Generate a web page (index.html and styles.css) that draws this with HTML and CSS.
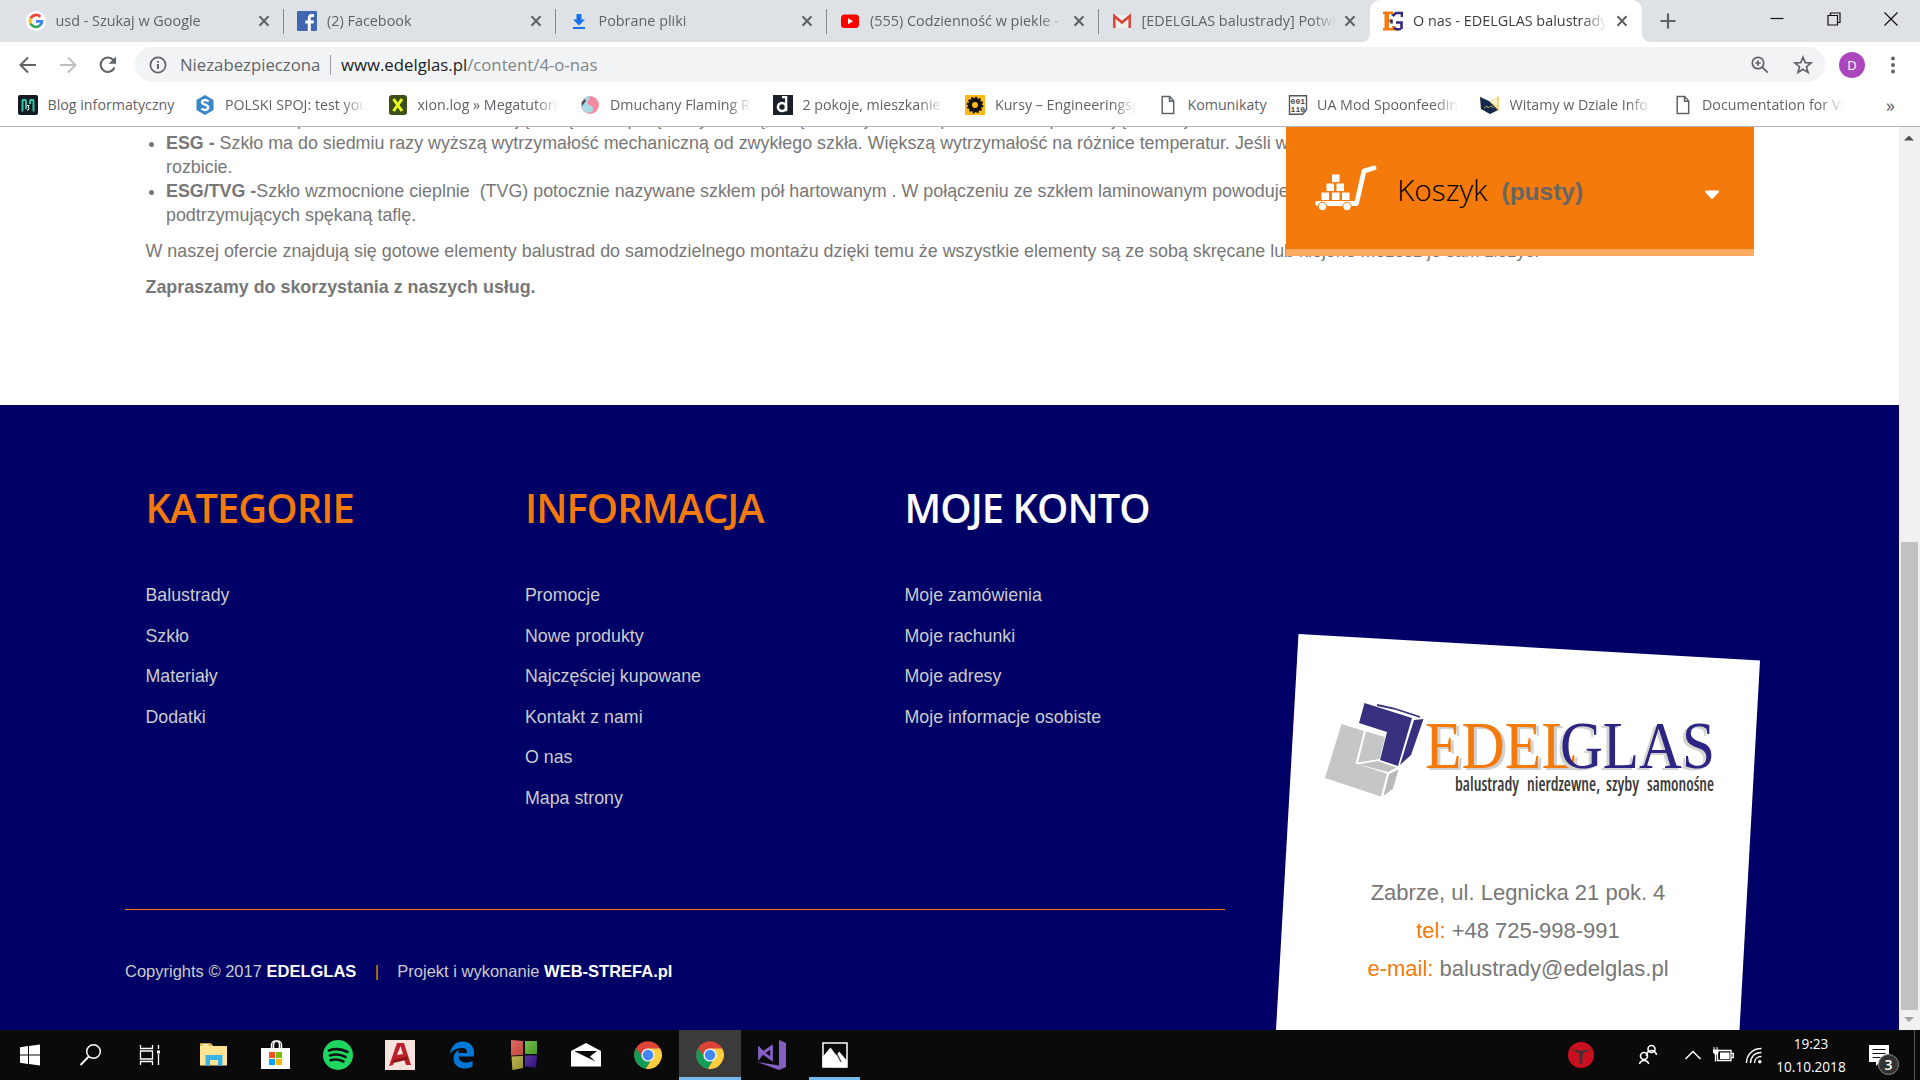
FILE: index.html
```html
<!DOCTYPE html>
<html lang="pl">
<head>
<meta charset="utf-8">
<title>O nas - EDELGLAS balustrady</title>
<link rel="stylesheet" href="styles.css">
</head>
<body>
<svg class="defs" aria-hidden="true">
  <symbol id="x" viewBox="0 0 12 12"><path d="M1.5 1.2l9 9.6M10.5 1.2l-9 9.6" stroke="#5f6368" stroke-width="2"/></symbol>
  <symbol id="page" viewBox="0 0 20 20"><path d="M4.2 1.5h7.5l4 4.5v12.500h-11.500zM11.500 1.500v4.700h4" fill="none" stroke="#5f6368" stroke-width="1.500"/></symbol>
  <symbol id="chrome" viewBox="0 0 28 28">
    <circle cx="14" cy="14" r="13.800" fill="#db4437"/>
    <path d="M2 7.200A13.800 13.800 0 0 0 12 27.700L18 17 14 14 8 15z" fill="#0f9d58"/>
    <path d="M14 7.500h12.200A13.800 13.800 0 0 1 12 27.700L19 16z" fill="#ffcd40"/>
    <circle cx="14" cy="14" r="6.600" fill="#f1f1f1"/><circle cx="14" cy="14" r="5.200" fill="#4285f4"/>
  </symbol>
</svg>

<header class="tabs">
  <div class="tab">
    <svg class="fav" viewBox="0 0 20 20"><circle cx="10" cy="10" r="10" fill="#fff"/><g fill="none" stroke-width="2.800"><path d="M14.300 5.700A6 6 0 0 0 4.700 7.300" stroke="#ea4335"/><path d="M4.700 7.300a6 6 0 0 0 0 5.400" stroke="#fbbc05"/><path d="M4.700 12.700a6 6 0 0 0 9 1.900" stroke="#34a853"/><path d="M13.700 14.600A6 6 0 0 0 16 10.300H10" stroke="#4285f4"/></g></svg>
    <span class="tab-title">usd - Szukaj w Google</span><svg class="close"><use href="#x"/></svg>
  </div>
  <div class="tab">
    <svg class="fav" viewBox="0 0 20 20"><rect width="20" height="20" rx="1" fill="#4267b2"/><path d="M13.800 20v-7.600h2.700l.4-3h-3.100V7.500c0-.9.3-1.500 1.600-1.500h1.600V3.300c-.5-.1-1.300-.2-2.300-.2-2.400 0-3.900 1.400-3.900 3.900v2.400H8.300v3h2.500V20z" fill="#fff"/></svg>
    <span class="tab-title">(2) Facebook</span><svg class="close"><use href="#x"/></svg>
  </div>
  <div class="tab">
    <svg class="fav" viewBox="0 0 20 20"><path d="M7.500 3h5v5.500H16l-6 6-6-6h3.500zM4 16h12v2H4z" fill="#1a73e8"/></svg>
    <span class="tab-title">Pobrane pliki</span><svg class="close"><use href="#x"/></svg>
  </div>
  <div class="tab">
    <svg class="fav" viewBox="0 0 20 20"><rect x="1" y="3.500" width="18" height="13.500" rx="3.500" fill="#f00"/><path d="M8 7.200l5 3-5 3z" fill="#fff"/></svg>
    <span class="tab-title">(555) Codzienność w piekle -</span><svg class="close"><use href="#x"/></svg>
  </div>
  <div class="tab last">
    <svg class="fav" viewBox="0 0 20 20"><path d="M2 4h16v13H2z" fill="#eee"/><path d="M2.300 17V5l7.700 6.500L17.700 5v12" fill="none" stroke="#db4437" stroke-width="2.500"/></svg>
    <span class="tab-title">[EDELGLAS balustrady] Potwi</span><svg class="close"><use href="#x"/></svg>
  </div>
  <div class="tab active">
    <svg class="fav" viewBox="0 0 20 20"><path d="M0 .500h10v4H8V3H6v5.500h3v2.500H6v6h3v-2h3v4.500H0v-2.500h1.500V3H0z" fill="#f47a0b"/><path d="M19 6V2h-2.500L13 2 9.500 5M8.500 8.500v4M11 17l3 1.500 4-.5M13 11.500h5.500V18" fill="none" stroke="#332a80" stroke-width="2.600"/></svg>
    <span class="tab-title">O nas - EDELGLAS balustrady</span><svg class="close"><use href="#x"/></svg>
  </div>
  <svg class="plus" viewBox="0 0 16 16"><path d="M8 .500v15M.500 8h15" stroke="#5f6368" stroke-width="2.200"/></svg>
  <div class="window-buttons">
    <svg viewBox="0 0 14 14"><path d="M.500 6.500h13" stroke="#111" stroke-width="1.200"/></svg>
    <svg viewBox="0 0 14 14"><path d="M1 3.500h9.500V13H1zM3.500 3.500V1h9.500v9.500h-2.500" fill="none" stroke="#111" stroke-width="1.200"/></svg>
    <svg viewBox="0 0 14 14"><path d="M.500.500l13 13M13.500.500l-13 13" stroke="#111" stroke-width="1.200"/></svg>
  </div>
</header>

<div class="toolbar">
  <svg class="nav" viewBox="0 0 20 20"><path d="M18 10H3M10 2.500L2.500 10l7.500 7.500" fill="none" stroke="#5f6368" stroke-width="2"/></svg>
  <svg class="nav" viewBox="0 0 20 20"><path d="M2 10h15M10 2.500l7.500 7.500-7.500 7.500" fill="none" stroke="#bdc1c6" stroke-width="2"/></svg>
  <svg class="nav" viewBox="0 0 20 20"><path d="M16.500 12.500A7.200 7.200 0 1 1 15.300 5" fill="none" stroke="#5f6368" stroke-width="2.100"/><path d="M18 1.500v7.300h-7.300z" fill="#5f6368"/></svg>
  <div class="omnibox">
    <svg class="info" viewBox="0 0 18 18"><circle cx="9" cy="9" r="7.600" fill="none" stroke="#5f6368" stroke-width="1.700"/><path d="M9 8v5M9 5v1.800" stroke="#5f6368" stroke-width="1.900"/></svg>
    <span class="secure">Niezabezpieczona</span>
    <span class="url"><b>www.edelglas.pl</b>/content/4-o-nas</span>
    <svg class="zoomer" viewBox="0 0 18 18"><circle cx="7" cy="7" r="5.700" fill="none" stroke="#5f6368" stroke-width="1.700"/><path d="M11.200 11.200l5.500 5.500M7 4.300v5.400M4.300 7h5.400" stroke="#5f6368" stroke-width="1.700"/></svg>
    <svg class="star" viewBox="0 0 20 20"><path d="M10 2.200l2.200 5.400 5.800.4-4.500 3.700 1.500 5.700-5-3.100-5 3.100 1.500-5.700L2 8l5.800-.4z" fill="none" stroke="#5f6368" stroke-width="1.700"/></svg>
  </div>
  <span class="avatar">D</span>
  <svg class="dots" viewBox="0 0 6 18"><g fill="#5f6368"><circle cx="3" cy="2.500" r="2"/><circle cx="3" cy="9" r="2"/><circle cx="3" cy="15.500" r="2"/></g></svg>
</div>

<nav class="bookmarks">
  <a class="bm"><svg viewBox="0 0 20 20"><rect width="20" height="20" rx="2" fill="#131b20"/><path d="M4.500 16.500V5.500M15.500 16.500V5.500M8 14V5.500M12 9V5.500M4 5h4.500M11.500 5H16" stroke="#2bc4a4" stroke-width="2" fill="none"/><path d="M8.800 10.500h2.400l-1.200 1.700 1.200 1-1 1.800H8.800" stroke="#fff" fill="none"/></svg><span>Blog informatyczny</span></a>
  <a class="bm"><svg viewBox="0 0 20 20"><path d="M10 0l8.500 5v10L10 20l-8.500-5V5z" fill="#3b86c8"/><path d="M13.500 6.500C11 4 6.800 5 7 7.500s6.200 2 6.200 4.800-4.200 3.600-6.700 1.200" fill="none" stroke="#fff" stroke-width="2.400"/></svg><span class="fade">POLSKI SPOJ: test you</span></a>
  <a class="bm"><svg viewBox="0 0 20 20"><rect x="1" width="18" height="20" rx="3" fill="#3d4f16"/><path d="M5.500 4l8.500 12M14 4L5.500 16" stroke="#e8ff1e" stroke-width="3"/></svg><span class="fade">xion.log » Megatutori</span></a>
  <a class="bm"><svg viewBox="0 0 20 20"><circle cx="10" cy="10" r="9" fill="#f58ba0"/><path d="M2 8c2-6 5-7 8-7-1 4-3 5-2 8 2 2 6 2 5 6-1 3-5 4-8 2-3-2-4-6-3-9z" fill="#a9d9e4"/><path d="M2 7l3-3 1 2-4 5z" fill="#4a4a55"/></svg><span class="fade">Dmuchany Flaming R</span></a>
  <a class="bm"><svg viewBox="0 0 20 20"><rect width="20" height="20" fill="#1a2029"/><circle cx="9" cy="12" r="4" fill="none" stroke="#fff" stroke-width="2.600"/><path d="M9 2.200h4.200v14" fill="none" stroke="#fff" stroke-width="2.200"/></svg><span class="fade">2 pokoje, mieszkanie</span></a>
  <a class="bm"><svg viewBox="0 0 20 20"><rect width="20" height="20" fill="#fdb813"/><circle cx="10" cy="10" r="5" fill="none" stroke="#111" stroke-width="4"/><circle cx="10" cy="10" r="7.300" fill="none" stroke="#111" stroke-width="2" stroke-dasharray="2.200 1.600"/></svg><span class="fade">Kursy – Engineeringsp</span></a>
  <a class="bm"><svg><use href="#page"/></svg><span>Komunikaty</span></a>
  <a class="bm"><svg viewBox="0 0 20 20"><path d="M1.500.700h17v14l-4 4.600h-13z" fill="#fff" stroke="#555" stroke-width="1.400"/><text x="2.600" y="8.800" class="bits">001</text><text x="2.600" y="17" class="bits">110</text></svg><span class="fade">UA Mod Spoonfeedin</span></a>
  <a class="bm"><svg viewBox="0 0 20 20"><path d="M0 1l9 6 10-6v14l-9 4-9-5z" fill="#f5d77a"/><path d="M3 3l6 5 8-5v8z" fill="#fdf3d0"/><path d="M0 2l9 4 9 9-8 4-9-5z" fill="#14284f"/><path d="M4 13l3-2 1 2 3-2 3 2" stroke="#b9a04c" fill="none"/></svg><span class="fade">Witamy w Dziale Info</span></a>
  <a class="bm"><svg><use href="#page"/></svg><span class="fade">Documentation for Vi</span></a>
  <a class="more">»</a>
</nav>

<div class="viewport">
  <main class="page">
    <section class="content">
      <ul>
        <li><b>VSG -</b> Szkło bezpieczne laminowane składające się z tafli połączonych folią, dzięki której odłamki po stłuczeniu pozostają na miejscu.</li>
        <li><b>ESG -</b> Szkło ma do siedmiu razy wyższą wytrzymałość mechaniczną od zwykłego szkła. Większą wytrzymałość na różnice temperatur. Jeśli w szkło uderzymy nastąpi jego<br>rozbicie.</li>
        <li><b>ESG/TVG -</b>Szkło wzmocnione cieplnie&nbsp; (TVG) potocznie nazywane szkłem pół hartowanym . W połączeniu ze szkłem laminowanym powoduje powstanie elementów<br>podtrzymujących spękaną taflę.</li>
      </ul>
      <p>W naszej ofercie znajdują się gotowe elementy balustrad do samodzielnego montażu dzięki temu że wszystkie elementy są ze sobą skręcane lub klejone możesz je sam złożyć.</p>
      <p><b>Zapraszamy do skorzystania z naszych usług.</b></p>
    </section>

    <div class="cart">
      <svg class="cart-icon" viewBox="0 0 64 46"><g fill="#fff"><path d="M18 9.500h7.500V17H18zM12.500 18.500H20V26h-7.500zM22.500 18.500H30V26h-7.500zM7.500 27.500H15V35H7.500zM18 27.500h7.500V35H18zM28 27.500h7.500V35H28z"/></g><path d="M3.500 38.500h39L50 6l10-3" fill="none" stroke="#fff" stroke-width="4.800" stroke-linecap="round" stroke-linejoin="round"/><g fill="#fff" stroke="#f47a0b"><circle cx="8.500" cy="41.500" r="4.200"/><circle cx="33" cy="41.500" r="4.200"/></g></svg>
      <span class="cart-name">Koszyk</span>
      <b class="cart-state">(pusty)</b>
      <svg class="caret" viewBox="0 0 16 10"><path d="M2 1.500h12L8 8z" fill="#fff" stroke="#fff" stroke-width="2" stroke-linejoin="round"/></svg>
    </div>

    <footer class="footer">
      <div class="footer-main">
        <div class="columns">
          <div class="column">
            <h4>KATEGORIE</h4>
            <ul><li>Balustrady</li><li>Szkło</li><li>Materiały</li><li>Dodatki</li></ul>
          </div>
          <div class="column">
            <h4>INFORMACJA</h4>
            <ul><li>Promocje</li><li>Nowe produkty</li><li>Najczęściej kupowane</li><li>Kontakt z nami</li><li>O nas</li><li>Mapa strony</li></ul>
          </div>
          <div class="column">
            <h4 class="white">MOJE KONTO</h4>
            <ul><li>Moje zamówienia</li><li>Moje rachunki</li><li>Moje adresy</li><li>Moje informacje osobiste</li></ul>
          </div>
        </div>
        <div class="copyright">
          <span>Copyrights © 2017 <b>EDELGLAS</b></span><span class="bar">|</span><span>Projekt i wykonanie <b>WEB-STREFA.pl</b></span>
        </div>
      </div>
      <div class="card">
        <svg class="logo" viewBox="-2 0 420 120">
          <path d="M31.500 34L54 41l-8.500 32.500L77 83.500 71 106.500 15 88z" fill="#c5c6c6"/>
          <path d="M56 41.500l19 5.500-5.500 22L48 72.500z" fill="#c5c6c6"/>
          <path d="M48.500 74.200L68 71l18.500 6.500-8.500 4.500z" fill="#bfc1c1"/>
          <path d="M79 84l9.500-4.500-5.500 19-9.500 7.500z" fill="#b9bbbb"/>
          <path d="M54.500 13L102 28 88 76 70 70l7-28-28-9z" fill="#37307f"/>
          <path d="M104 30l9.500-1L101 65l-11 10z" fill="#37307f"/>
          <path d="M67 15l17 3.500 26 8.500" fill="none" stroke="#37307f" stroke-width="1.800"/>
          <text class="edel" x="115" y="78" textLength="153" lengthAdjust="spacingAndGlyphs">EDEL</text>
          <text class="glas" x="250" y="78" textLength="155" lengthAdjust="spacingAndGlyphs">GLAS</text>
          <text class="tagline" x="145" y="101" textLength="64" lengthAdjust="spacingAndGlyphs">balustrady</text>
          <text class="tagline" x="217" y="101" textLength="73" lengthAdjust="spacingAndGlyphs">nierdzewne,</text>
          <text class="tagline" x="296" y="101" textLength="33" lengthAdjust="spacingAndGlyphs">szyby</text>
          <text class="tagline" x="337" y="101" textLength="67" lengthAdjust="spacingAndGlyphs">samonośne</text>
        </svg>
        <p>Zabrze, ul. Legnicka 21 pok. 4</p>
        <p><em>tel:</em> +48 725-998-991</p>
        <p><em>e-mail:</em> balustrady@edelglas.pl</p>
      </div>
    </footer>
  </main>
  <div class="scrollbar">
    <svg viewBox="0 0 20 20"><path d="M10 8.500l5 5H5z" fill="#505050"/></svg>
    <div class="thumb"></div>
    <svg viewBox="0 0 20 20"><path d="M10 12l5-5H5z" fill="#a3a3a3"/></svg>
  </div>
</div>

<div class="taskbar">
  <div class="sys">
    <span><svg viewBox="0 0 30 30"><path d="M5 7.200l8-1.200v8.400H5zM14 5.900L25 4.500v9.900H14zM5 15.500h8v8.400l-8-1.200zM14 15.500h11v9.900L14 24z" fill="#fff"/></svg></span>
    <span><svg viewBox="0 0 30 30"><circle cx="18.500" cy="11.500" r="6.800" fill="none" stroke="#fff" stroke-width="1.500"/><path d="M13.800 16.500L5.500 25" stroke="#fff" stroke-width="1.800"/></svg></span>
    <span><svg viewBox="0 0 30 30"><path d="M5.500 5v3.500h12V5M5.500 11h12v8h-12zM5.500 25v-3.500h12V25M23.500 5v4M23.500 14v11" fill="none" stroke="#fff" stroke-width="1.300"/><path d="M22 10.500h3v3h-3z" fill="#fff"/></svg></span>
  </div>
  <div class="apps">
    <span><svg viewBox="0 0 30 30"><path d="M1 3.500h11l2 2.500h14v19.500H1z" fill="#ffe494"/><path d="M1 3.500h11l2 2.500H1z" fill="#e8b73a"/><path d="M3.500 4h6v1.500h-6z" fill="#fff"/><path d="M6.500 25.500V15h17v10.500h-4.500V20h-8v5.500z" fill="#3bb3e8"/></svg></span>
    <span><svg viewBox="0 0 30 30"><path d="M10.500 9V5a4 4 0 0 1 8 0v4M12.500 9V5a4 4 0 0 1 8 0v4" fill="none" stroke="#fff" stroke-width="1.500"/><path d="M0 8h29v21H0z" fill="#fff"/><path d="M8 12h6v6H8z" fill="#f25022"/><path d="M15 12h6v6h-6z" fill="#7fba00"/><path d="M8 19h6v6H8z" fill="#00a4ef"/><path d="M15 19h6v6h-6z" fill="#ffb900"/></svg></span>
    <span><svg viewBox="0 0 30 30"><circle cx="15" cy="15" r="15" fill="#1ed760"/><path d="M6 10.500c6-2 13-1.500 18.500 1.500M7 15.500c5-1.500 11-1 15.500 1.500M7.500 20.200c4.500-1.300 9-.8 13 1.300" fill="none" stroke="#111" stroke-width="2.600" stroke-linecap="round"/></svg></span>
    <span><svg viewBox="0 0 30 30"><path d="M0 0h30v30H0z" fill="#f6e3de"/><path d="M4 26L12 3h7l7 22h-5l-2-6-9 1-2 5zM12 15l6-1-2.500-8z" fill="#bd2028" fill-rule="evenodd"/><path d="M8 20.500l14-4 1 3-15 3.500z" fill="#8a1118"/></svg></span>
    <span><svg viewBox="0 0 30 30"><path d="M3 13.500C4.500 5 10 1.500 15.500 1.500c8 0 11.500 5.500 11.500 11.500v3.500H11.500c.3 4 3.500 6 7.500 6 3 0 5-.7 6.500-1.500v5.500c-2 1.200-4.500 2-8 2-7 0-11-4.500-11-10 0-4 2.500-7.500 6-9-.8 1-1.200 2-1.300 3.500h9c0-3-1.500-5-5-5-5 0-9.500 2-12.200 5.500z" fill="#0078d7"/></svg></span>
    <span><svg viewBox="0 0 30 30"><defs><linearGradient id="shade" x2="1" y2="1"><stop stop-color="#fff" stop-opacity=".3"/><stop offset="1" stop-color="#000" stop-opacity=".35"/></linearGradient></defs><path d="M2 0l12 1v14L2 15.500z" fill="#d52b1e"/><path d="M16 1h12v13H16z" fill="#4fc11c"/><path d="M2.500 16.500L14 16v12L3.500 30z" fill="#bdb524"/><path d="M16 15.500h12l-1 12-11-1z" fill="#4713b5"/><path d="M2 0l12 1v14L2 15.500zM16 1h12v13H16zM2.500 16.500L14 16v12L3.500 30zM16 15.500h12l-1 12-11-1z" fill="url(#shade)"/></svg></span>
    <span><svg viewBox="0 0 30 30"><path d="M0 11L15 3l15 8v15.500H0z" fill="#fff"/><path d="M4 11h22l-7 5.500 5.500 5L4 11.500z" fill="#0a0a0a"/></svg></span>
    <span><svg class="ball"><use href="#chrome"/></svg></span>
    <span class="current"><svg class="ball"><use href="#chrome"/></svg></span>
    <span><svg viewBox="0 0 30 30"><path d="M22 0l7 3v24l-7 3L0 22l22 3.500z" fill="#865fc5"/><path d="M2.500 9l3.500 3.500L2.500 17zM6 13l8.500-6v12z" fill="none" stroke="#865fc5" stroke-width="2.800"/></svg></span>
    <span class="open"><svg viewBox="0 0 30 30"><path d="M3 3h24v24H3z" fill="#0a0a0a" stroke="#fff" stroke-width="1.500"/><path d="M2.500 27V17L10.500 7.500l6 8 2.500-4 8 9V27.500z" fill="#fff"/><path d="M17 14l4 8" stroke="#555" stroke-width="1.500"/></svg></span>
  </div>
  <svg class="tray" viewBox="0 0 220 50">
    <circle cx="21" cy="25" r="13" fill="#c8101f"/><path d="M10.500 19l10.500 2 10.500-2-8.700 4.200L22 34h-2l-.8-10.800z" fill="#3a3436"/>
    <g fill="none" stroke="#fff" stroke-width="1.600"><circle cx="91.500" cy="19" r="3.500"/><path d="M86.500 26a5 5 0 0 1 10-1"/><circle cx="84" cy="26" r="3.500"/><path d="M79.500 34a4.800 4.800 0 0 1 9.200 0"/></g>
    <path d="M125.500 29l7.500-7.500 7.500 7.500" fill="none" stroke="#fff" stroke-width="1.500"/>
    <path d="M157.500 20.500H171v10h-13.500zM171.500 23.500h1.800v4h-1.800M155.500 23v8.500" fill="none" stroke="#fff" stroke-width="1.300"/><path d="M160 22.500h9.500v6.500H160zM153 19.500h5.500v3l-1.700 2h-2l-1.800-2z" fill="#fff"/><path d="M154 17v3M157 17v3" stroke="#fff"/>
    <g fill="none" stroke="#fff" stroke-width="1.400"><path d="M186.500 33c0-8 6-14.500 15-14.500M190.500 33c0-6 4-10.500 11-10.500M194.500 33c0-3.500 2.500-6.500 7-6.500"/></g><circle cx="199.800" cy="31.700" r="1.700" fill="#fff"/>
  </svg>
  <div class="clock"><span>19:23</span><span>10.10.2018</span></div>
  <svg class="notes" viewBox="0 0 32 50"><path d="M1 15h20v17H12l-4 4v-4H1z" fill="#fff"/><path d="M4.500 19.500h13M4.500 23.500h13M4.500 27.500h8" stroke="#111" stroke-width="1.200"/><circle cx="20.500" cy="34.500" r="10" fill="#333" stroke="#8a8a8a"/><text x="20.500" y="39.500" class="count">3</text></svg>
  <i class="peek"></i>
</div>
</body>
</html>
```
FILE: styles.css
```css
* { box-sizing: border-box; }
body {
  margin: 0;
  width: 1920px;
  height: 1080px;
  overflow: hidden;
  display: flex;
  flex-direction: column;
  background: #fff;
  font-family: "Open Sans", "Noto Sans", sans-serif;
}
svg { display: block; flex: none; }
ul, p, h4 { margin: 0; padding: 0; }
.defs { display: none; }

/* Browser tabs */
.tabs {
  height: 42px;
  flex: none;
  display: flex;
  align-items: center;
  padding-left: 12.500px;
  background: #dee1e6;
}
.tab {
  position: relative;
  width: 271.500px;
  height: 42px;
  flex: none;
  display: flex;
  align-items: center;
  padding-left: 13px;
}
.tab:not(.active):not(.last)::after {
  content: "";
  position: absolute;
  right: 0;
  top: 9px;
  width: 1px;
  height: 25px;
  background: #85888c;
}
.tab.last::after {
  content: "";
}
.tab.active { background: #fff; border-radius: 10px 10px 0 0; }
.tab.active::before,
.tab.active::after {
  content: "";
  position: absolute;
  bottom: 0;
  width: 8px;
  height: 8px;
}
.tab.active::before { left: -8px; background: radial-gradient(circle at 0 0, transparent 7.500px, #fff 8px); }
.tab.active::after { right: -8px; background: radial-gradient(circle at 100% 0, transparent 7.500px, #fff 8px); }
.fav { width: 20px; height: 20px; margin-right: 10px; }
.tab-title {
  width: 194px;
  margin-right: 8.500px;
  white-space: nowrap;
  font-size: 14.400px;
  line-height: 24px;
  color: #5f6368;
  -webkit-mask-image: linear-gradient(to right, #000 170px, transparent 194px);
  mask-image: linear-gradient(to right, #000 170px, transparent 194px);
}
.active .tab-title { color: #3c4043; }
.close { width: 12px; height: 12px; }
.plus { width: 16px; height: 16px; margin-left: 18.500px; }
.window-buttons { display: flex; gap: 43px; margin: -5px 0 0 auto; padding-right: 22px; }
.window-buttons svg { width: 14px; height: 14px; }

/* Address row */
.toolbar { height: 45px; flex: none; display: flex; align-items: center; padding-left: 18px; }
.nav { width: 20px; height: 20px; margin-right: 20px; }
.omnibox {
  width: 1690px;
  height: 35px;
  margin-left: -3px;
  display: flex;
  align-items: center;
  padding-left: 14px;
  border-radius: 18px;
  background: #f1f3f4;
  font-size: 16.750px;
  color: #5f6368;
}
.info { width: 18px; height: 18px; margin-right: 13px; }
.secure { width: 151px; height: 20px; line-height: 20px; border-right: 1px solid #9aa0a6; }
.url { margin-left: 10px; line-height: 20px; color: #80868b; }
.url b { font-weight: 400; color: #202124; }
.zoomer { width: 18px; height: 18px; margin-left: auto; }
.star { width: 20px; height: 20px; margin: 0 12px 0 24px; }
.avatar {
  width: 26px;
  height: 26px;
  margin-left: 14px;
  border-radius: 50%;
  background: #ab47bc;
  color: #fff;
  font-size: 13px;
  line-height: 26px;
  text-align: center;
}
.dots { width: 6px; height: 18px; margin-left: 25px; }

/* Bookmarks row */
.bookmarks {
  height: 40px;
  flex: none;
  display: flex;
  align-items: center;
  gap: 21px;
  padding: 0 0 4px 18px;
  border-bottom: 1px solid #b4b4b4;
  color: #5f6368;
  font-size: 14.240px;
}
.bm { display: flex; align-items: center; gap: 9.500px; }
.bm svg { width: 20px; height: 20px; }
.bm span { white-space: nowrap; line-height: 24px; }
.bm .fade {
  width: 142px;
  -webkit-mask-image: linear-gradient(to right, #000 118px, transparent 142px);
  mask-image: linear-gradient(to right, #000 118px, transparent 142px);
}
.bits { font: bold 8px "Liberation Mono", monospace; fill: #444; }
.more { margin-left: 21px; font-size: 18px; line-height: 20px; }

/* Web page */
.viewport { height: 903px; flex: none; display: flex; overflow: hidden; }
.page { position: relative; width: 1899px; font-family: "Liberation Sans", Arial, sans-serif; }
.content {
  height: 278px;
  padding: 0 145px 0 145.500px;
  overflow: hidden;
  font-size: 17.880px;
  line-height: 24px;
  color: #777;
  white-space: nowrap;
}
.content ul { margin-top: -20px; padding-left: 20.500px; }
.content p { margin-top: 12px; }
.cart {
  position: absolute;
  left: 1286px;
  top: 0;
  width: 468px;
  height: 129px;
  display: flex;
  align-items: center;
  padding-left: 28px;
  background: #f47a0b;
  border-bottom: 7px solid #ffac62;
}
.cart-icon { width: 64px; height: 46px; margin-right: 19px; }
.cart-name { width: 104.500px; font: 300 29.800px/40px "Open Sans", sans-serif; color: #000; margin-top: 3px; }
.cart-state { width: 202.500px; font-size: 24.500px; line-height: 30px; color: #666; margin-top: 8px; }
.caret { width: 16px; height: 10px; margin-top: 13px; }

.footer { height: 625px; display: flex; background: #006; }
.footer-main { width: 1276px; flex: none; padding: 74px 51px 0 125px; }
.columns { height: 431px; display: flex; padding-left: 20.500px; border-bottom: 1px solid #f47a0b; }
.column { width: 379.500px; flex: none; }
.column h4 {
  margin-bottom: 39px;
  padding-top: 1px;
  font: 600 39.800px/56px "Open Sans", sans-serif;
  letter-spacing: -.900px;
  color: #f47a0b;
}
.column h4.white { color: #fff; }
.column ul { list-style: none; }
.column li { height: 40.600px; line-height: 40.600px; font-size: 17.800px; color: #ccc; }
.copyright { display: flex; margin-top: 49px; font-size: 16.500px; line-height: 24px; color: #ccc; white-space: nowrap; }
.copyright b { color: #fff; }
.bar { width: 41px; text-align: center; color: #f47a0b; }
.card {
  width: 484px;
  flex: none;
  height: 396px;
  margin-top: 229px;
  padding-top: 56px;
  background: #fff;
  clip-path: polygon(22.500px 0, 100% 26.500px, 463.500px 100%, 0 100%);
  text-align: center;
  font-size: 22px;
  line-height: 38px;
  color: #777;
}
.logo { width: 420px; height: 120px; margin: 0 auto 64px; }
.logo .edel, .logo .glas { font: 68px "Liberation Serif", serif; }
.edel { fill: #f47a0b; filter: drop-shadow(3px 2px 0 #cfd0d0); }
.glas { fill: #2c2583; filter: drop-shadow(-3px 2px 0 #d3d3cf); }
.tagline { font: 600 20px "Open Sans", sans-serif; font-stretch: 75%; fill: #3a3a3a; }
.card em { font-style: normal; color: #f47a0b; }

.scrollbar { width: 21px; display: flex; flex-direction: column; background: #f1f1f1; }
.scrollbar svg { width: 20px; height: 20px; }
.thumb { height: 468px; margin: auto 2px 0 2px; background: #c1c1c1; }

/* Taskbar */
.taskbar { height: 50px; flex: none; display: flex; background: #0a0a0a; }
.sys, .apps { display: flex; }
.sys { width: 183px; }
.sys span, .apps span { width: 60px; height: 50px; display: flex; align-items: center; justify-content: center; }
.apps span { width: 62px; }
.sys svg, .apps svg { width: 30px; height: 30px; }
.apps svg.ball { width: 28px; height: 28px; }
.apps .current { background: #3b3b3b; border-bottom: 3px solid #76b9ed; padding-top: 3px; }
.apps .open { width: 51px; margin-left: 6px; border-bottom: 3px solid #76b9ed; padding-top: 3px; }
.tray { width: 220px; height: 50px; margin-left: 700px; }
.clock { width: 92px; display: flex; flex-direction: column; margin: 0 11px 0 -15px; padding-top: 2px; text-align: center; font-size: 13.600px; line-height: 23px; color: #fff; }
.notes { width: 32px; height: 50px; }
.count { font: 600 14px "Open Sans", sans-serif; fill: #fff; text-anchor: middle; }
.peek { width: 1px; margin-left: 14px; background: #555; }
```
